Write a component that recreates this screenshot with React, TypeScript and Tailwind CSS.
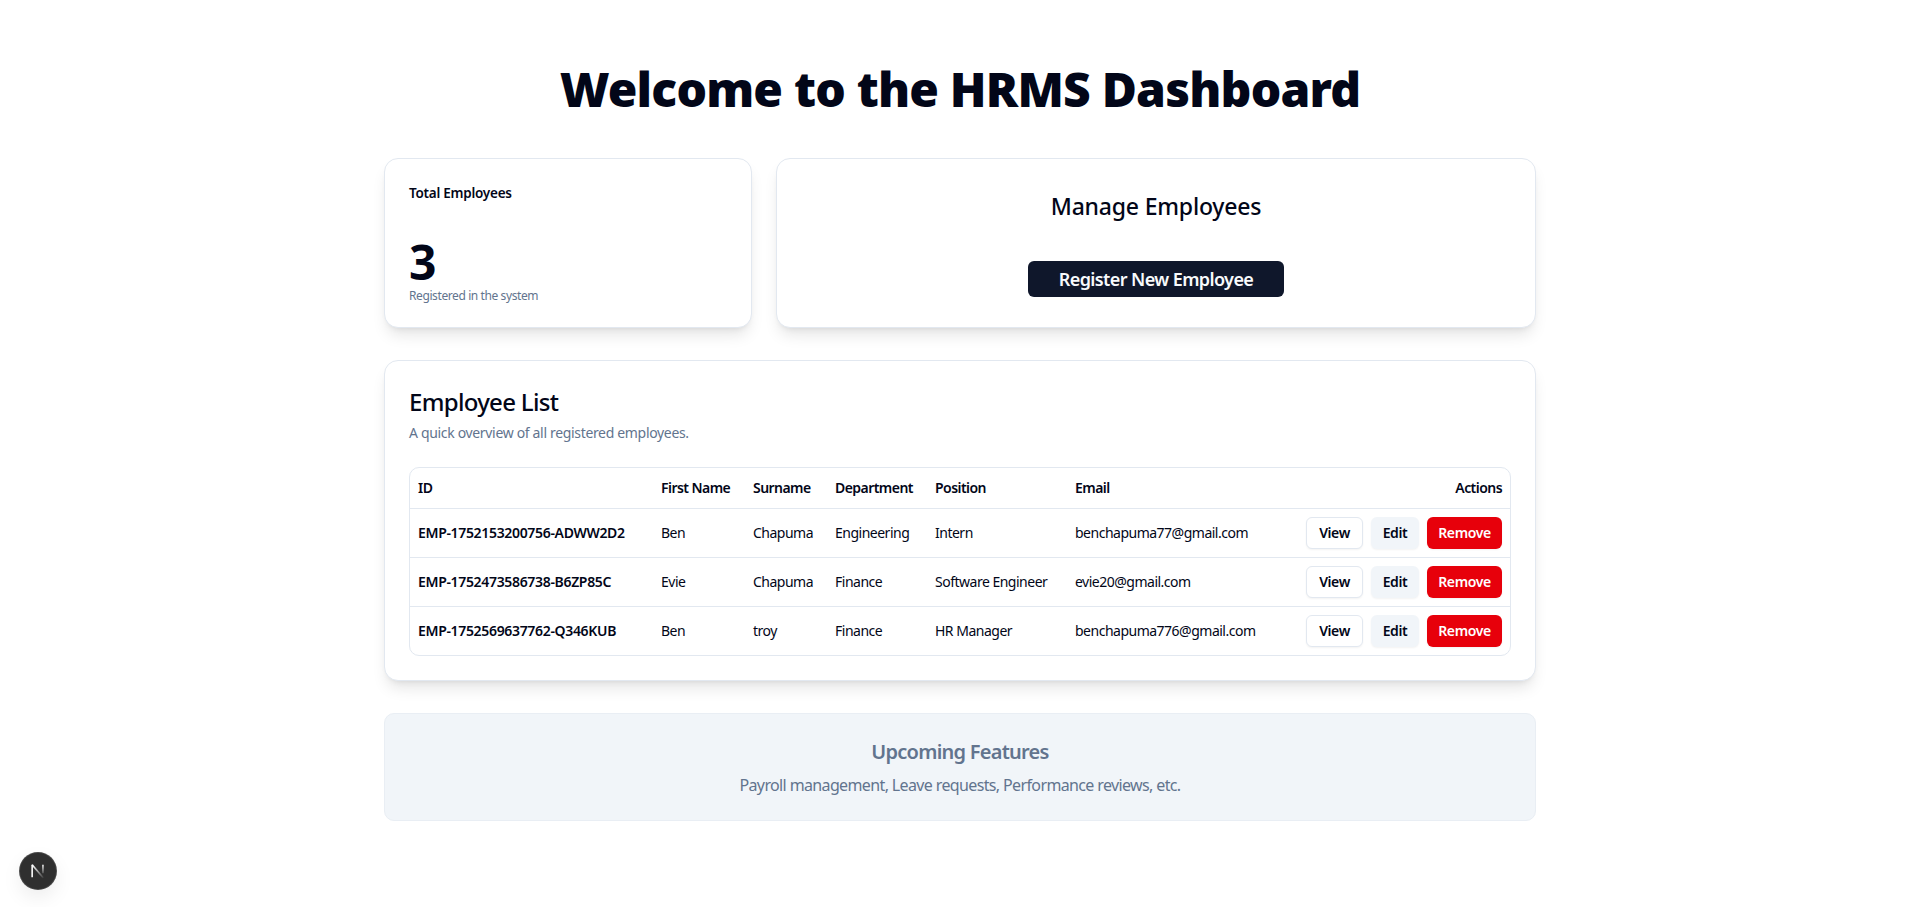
const FONT = "font-['Noto_Sans',sans-serif]";

const rows = [
  ["EMP-1752153200756-ADWW2D2", "Ben", "Chapuma", "Engineering", "Intern", "benchapuma77@gmail.com"],
  ["EMP-1752473586738-B6ZP85C", "Evie", "Chapuma", "Finance", "Software Engineer", "evie20@gmail.com"],
  ["EMP-1752569637762-Q346KUB", "Ben", "troy", "Finance", "HR Manager", "benchapuma776@gmail.com"],
];

const card = "rounded-[14px] border border-[#e2e8f0] bg-white shadow-lg";

function NextBadge() {
  return (
    <div className="fixed bottom-[18px] left-[20px] flex h-[36px] w-[36px] items-center justify-center rounded-full bg-[#2f2f2f] shadow-[0_0_0_1px_#4a4a4a,0_8px_20px_rgba(0,0,0,0.08)]">
      <svg width="18" height="18" viewBox="0 0 16 16" fill="none">
        <path d="M2.8 2.5V13.5" stroke="#fff" strokeWidth="1.4" />
        <path d="M2.8 2.5L12.6 14" stroke="url(#nfade)" strokeWidth="1.5" />
        <path d="M12.4 2.5V10" stroke="url(#nfade2)" strokeWidth="1.4" />
        <defs>
          <linearGradient id="nfade" x1="3" y1="3" x2="12" y2="14" gradientUnits="userSpaceOnUse">
            <stop stopColor="#fff" />
            <stop offset="1" stopColor="#fff" stopOpacity="0.1" />
          </linearGradient>
          <linearGradient id="nfade2" x1="12" y1="2" x2="12" y2="10" gradientUnits="userSpaceOnUse">
            <stop stopColor="#fff" />
            <stop offset="1" stopColor="#fff" stopOpacity="0.2" />
          </linearGradient>
        </defs>
      </svg>
    </div>
  );
}

export default function App() {
  return (
    <div className={`${FONT} min-h-[907px] bg-white text-[#020618]`}>
      <div className="mx-auto w-[1152px] pt-[65px]">
        <h1 className="mb-[45px] text-center text-[48px] leading-[48px] font-black tracking-[-0.8px]">
          Welcome to the HRMS Dashboard
        </h1>

        <div className="flex gap-6">
          <div className={`${card} flex h-[170px] w-[368px] flex-col px-6 pt-[24px]`}>
            <div className="text-[13.5px] leading-[20px] font-semibold tracking-[-0.25px]">Total Employees</div>
            <div className="mt-[35px] text-[48px] leading-[48px] font-bold">3</div>
            <div className="mt-[2px] text-[12px] leading-[16px] tracking-[-0.4px] text-[#62748e]">Registered in the system</div>
          </div>
          <div className={`${card} flex h-[170px] flex-1 flex-col items-center pt-[31px]`}>
            <div className="text-[23px] leading-[32px] font-medium tracking-[-0.2px]">Manage Employees</div>
            <button className="mt-[39px] h-[36px] w-[256px] rounded-md bg-[#0f172b] text-[18px] font-semibold tracking-[-0.6px] text-[#f8fafc]">
              Register New Employee
            </button>
          </div>
        </div>

        <div className={`${card} mt-8 h-[321px] px-6 pt-[25px]`}>
          <div className="text-[24px] leading-[32px] font-medium tracking-[-0.7px]">Employee List</div>
          <div className="mt-[5px] text-[14px] leading-[20px] tracking-[-0.33px] text-[#62748e]">
            A quick overview of all registered employees.
          </div>
          <div className="mt-[24px] overflow-hidden rounded-[10px] border border-[#e2e8f0]">
            <table className="w-full table-fixed border-collapse text-[14px] tracking-[-0.5px]">
              <colgroup>
                <col className="w-[243px]" />
                <col className="w-[92px]" />
                <col className="w-[82px]" />
                <col className="w-[100px]" />
                <col className="w-[140px]" />
                <col />
                <col className="w-[212px]" />
              </colgroup>
              <thead>
                <tr className="h-[40px] border-b border-[#e2e8f0]">
                  {["ID", "First Name", "Surname", "Department", "Position", "Email"].map((h) => (
                    <th key={h} className="px-2 text-left font-semibold tracking-[-0.55px] whitespace-nowrap">{h}</th>
                  ))}
                  <th className="px-2 text-right font-semibold tracking-[-0.55px]">Actions</th>
                </tr>
              </thead>
              <tbody>
                {rows.map((r, i) => (
                  <tr key={r[0]} className={`h-[49px] ${i < 2 ? "border-b border-[#e2e8f0]" : ""}`}>
                    {r.map((c, j) => (
                      <td key={j} className={`px-2 whitespace-nowrap ${j === 0 ? "font-semibold tracking-[-0.33px]" : ""}`}>{c}</td>
                    ))}
                    <td className="px-2">
                      <div className="flex justify-end gap-2 font-semibold tracking-[-0.4px]">
                        <button className="h-[32px] w-[57px] shrink-0 rounded-md border border-[#e2e8f0] bg-white shadow-xs">View</button>
                        <button className="h-[32px] w-[48px] shrink-0 rounded-md bg-[#f1f5f9] shadow-xs">Edit</button>
                        <button className="h-[32px] w-[75px] shrink-0 rounded-md bg-[#e7000b] text-white shadow-xs">Remove</button>
                      </div>
                    </td>
                  </tr>
                ))}
              </tbody>
            </table>
          </div>
        </div>

        <div className="mt-8 flex h-[108px] flex-col items-center rounded-[10px] border border-[#e9eef4] bg-[#f1f5f9] pt-[24px]">
          <div className="text-[20px] leading-[28px] font-semibold tracking-[-0.75px] text-[#62748e]">Upcoming Features</div>
          <div className="mt-[7px] text-[16px] leading-[24px] tracking-[-0.63px] text-[#62748e]">
            Payroll management, Leave requests, Performance reviews, etc.
          </div>
        </div>
      </div>
      <NextBadge />
    </div>
  );
}
